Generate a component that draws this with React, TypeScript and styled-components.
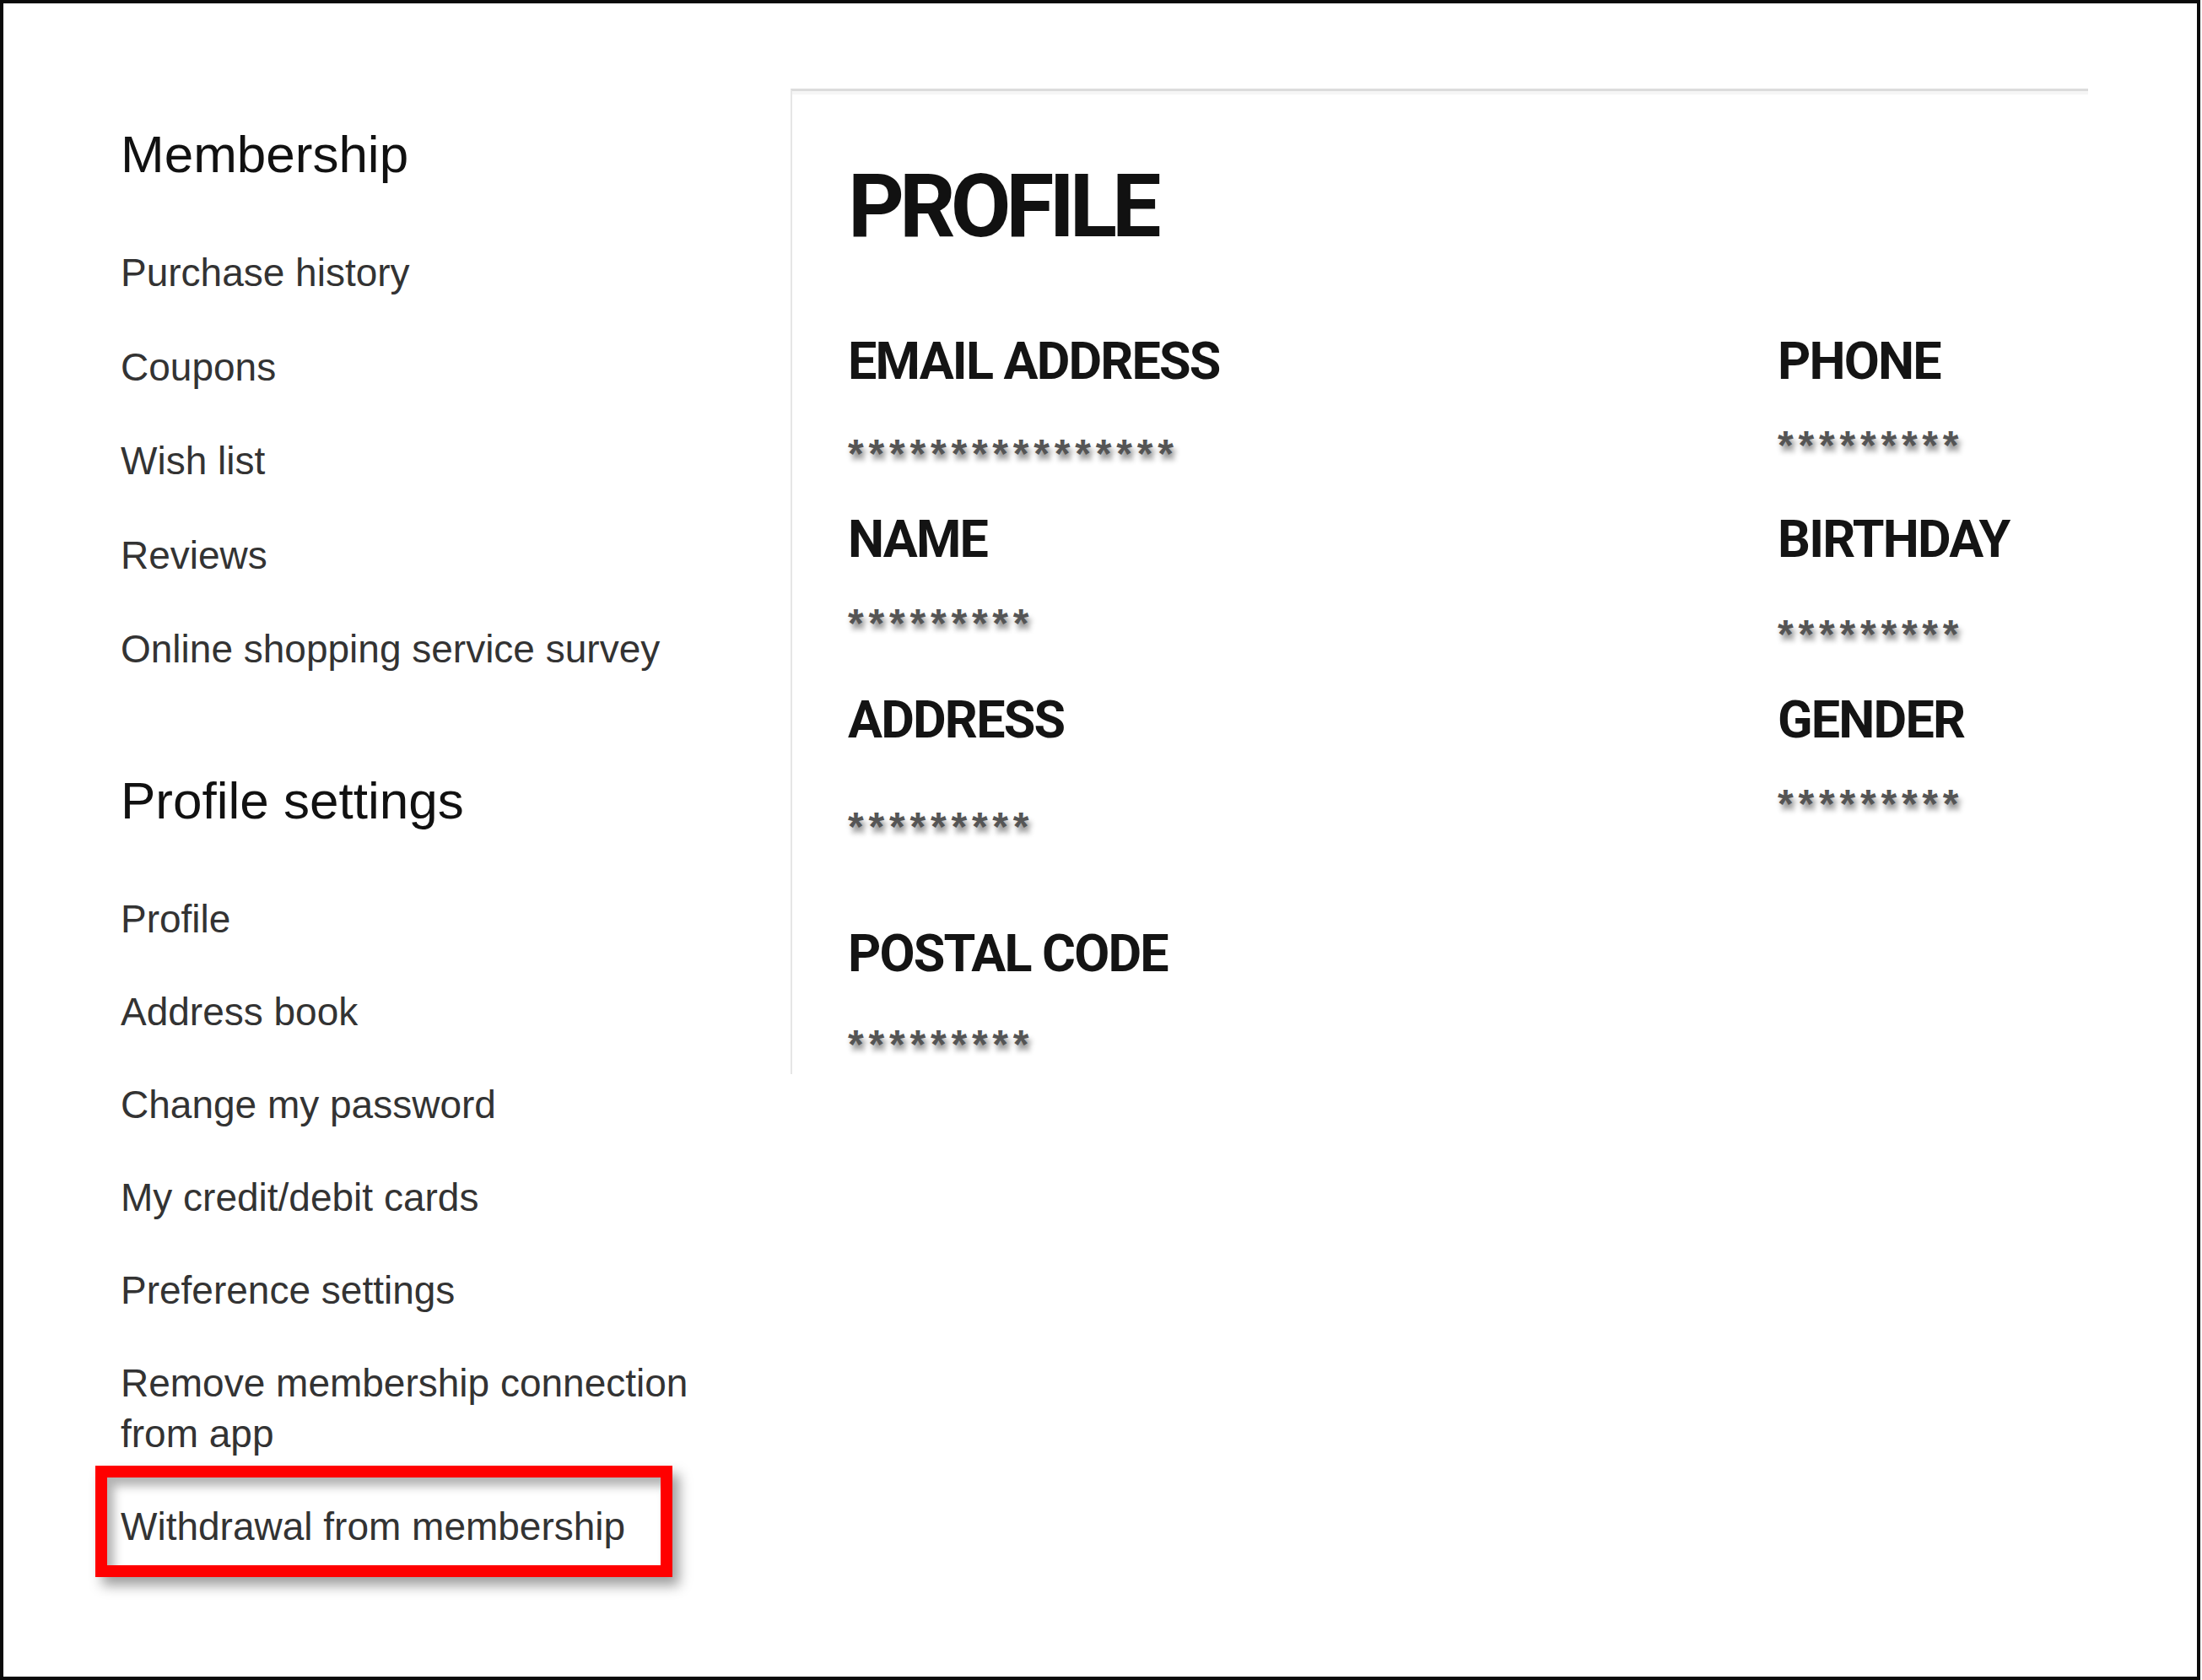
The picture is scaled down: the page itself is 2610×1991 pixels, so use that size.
import { styled, createGlobalStyle } from 'styled-components';

const GlobalStyle = createGlobalStyle`
	html, body {
		margin: 0;
		padding: 0;
		background: #ffffff;
	}
	* {
		box-sizing: border-box;
	}
`;

const membershipLinks = [
	'Purchase history',
	'Coupons',
	'Wish list',
	'Reviews',
	'Online shopping service survey',
];

const settingsLinks = [
	'Profile',
	'Address book',
	'Change my password',
	'My credit/debit cards',
	'Preference settings',
	'Remove membership connection from app',
	'Withdrawal from membership',
];

const stars = (n: number) => '*'.repeat(n);

const fields = [
	{ label: 'EMAIL ADDRESS', value: stars(16), gap: 48 },
	{ label: 'PHONE', value: stars(9), gap: 38 },
	{ label: 'NAME', value: stars(9), gap: 38 },
	{ label: 'BIRTHDAY', value: stars(9), gap: 51 },
	{ label: 'ADDRESS', value: stars(9), gap: 65 },
	{ label: 'GENDER', value: stars(9), gap: 38 },
	{ label: 'POSTAL CODE', value: stars(9), gap: 46, push: 49 },
];

const Frame = styled.div`
	width: 2608px;
	height: 1991px;
	border: 4px solid #0a0a0a;
	display: flex;
	align-items: flex-start;
	padding: 101px 0 0 139px;
	background: #ffffff;
`;

const Sidebar = styled.nav`
	width: 794px;
	flex-shrink: 0;
	padding-top: 40px;
	display: flex;
	flex-direction: column;
	gap: 112px;
`;

const Section = styled.section`
	display: flex;
	flex-direction: column;
`;

const SectionTitle = styled.h2`
	margin: 0 0 72px;
	font-family: 'Liberation Sans', Arial, sans-serif;
	font-weight: 400;
	font-size: 62px;
	line-height: 76px;
	color: #111111;
`;

const NavList = styled.ul<{ $gap: number }>`
	list-style: none;
	margin: 0;
	padding: 0;
	max-width: 700px;
	display: flex;
	flex-direction: column;
	align-items: flex-start;
	gap: ${(p) => p.$gap}px;
`;

const NavItem = styled.li<{ $marked?: boolean }>`
	position: relative;
	font-family: 'Liberation Sans', Arial, sans-serif;
	font-size: 46px;
	line-height: 60px;
	color: #333333;
	cursor: pointer;

	${(p) =>
		p.$marked &&
		`
		&::after {
			content: '';
			position: absolute;
			top: -42px;
			left: -30px;
			right: -56px;
			bottom: -30px;
			border: 14px solid #ff0000;
			box-shadow: 8px 10px 14px rgba(0, 0, 0, 0.38),
				inset 8px 10px 12px rgba(0, 0, 0, 0.3);
			pointer-events: none;
		}
	`}
`;

const Panel = styled.main`
	width: 1538px;
	height: 1168px;
	flex-shrink: 0;
	border-top: 3px solid #dcdcdc;
	border-left: 2px solid #e6e6e6;
	box-shadow: inset 0 40px 0 -36px #f6f6f6;
	padding: 77px 0 0 66px;
`;

const Heading = styled.h1`
	margin: 0 0 91px;
	font-family: Roboto, 'DejaVu Sans', sans-serif;
	font-weight: 700;
	font-size: 104px;
	line-height: 120px;
	letter-spacing: -6px;
	color: #111111;
`;

const FieldGrid = styled.div`
	display: grid;
	grid-template-columns: 1102px 1fr;
	row-gap: 59px;
	align-items: start;
`;

const Field = styled.div<{ $push?: number }>`
	display: flex;
	flex-direction: column;
	margin-top: ${(p) => p.$push ?? 0}px;
`;

const Label = styled.div`
	font-family: Roboto, 'DejaVu Sans', sans-serif;
	font-weight: 700;
	font-size: 61px;
	line-height: 64px;
	letter-spacing: -1.8px;
	color: #141414;
`;

const Value = styled.div<{ $gap: number }>`
	margin-top: ${(p) => p.$gap}px;
	font-family: 'Liberation Sans', Arial, sans-serif;
	font-weight: 700;
	font-size: 48px;
	line-height: 40px;
	height: 40px;
	letter-spacing: 5.8px;
	color: #555555;
	text-shadow: 3px 7px 6px rgba(0, 0, 0, 0.45);
	padding-top: 10px;
`;

export default function App() {
	return (
		<>
			<GlobalStyle />
			<Frame>
				<Sidebar>
					<Section>
						<SectionTitle>Membership</SectionTitle>
						<NavList $gap={51.5}>
							{membershipLinks.map((link) => (
								<NavItem key={link}>{link}</NavItem>
							))}
						</NavList>
					</Section>
					<Section>
						<SectionTitle>Profile settings</SectionTitle>
						<NavList $gap={50}>
							{settingsLinks.map((link) => (
								<NavItem
									key={link}
									$marked={link === 'Withdrawal from membership'}
								>
									{link}
								</NavItem>
							))}
						</NavList>
					</Section>
				</Sidebar>
				<Panel>
					<Heading>PROFILE</Heading>
					<FieldGrid>
						{fields.map((f) => (
							<Field key={f.label} $push={f.push}>
								<Label>{f.label}</Label>
								<Value $gap={f.gap}>{f.value}</Value>
							</Field>
						))}
					</FieldGrid>
				</Panel>
			</Frame>
		</>
	);
}
